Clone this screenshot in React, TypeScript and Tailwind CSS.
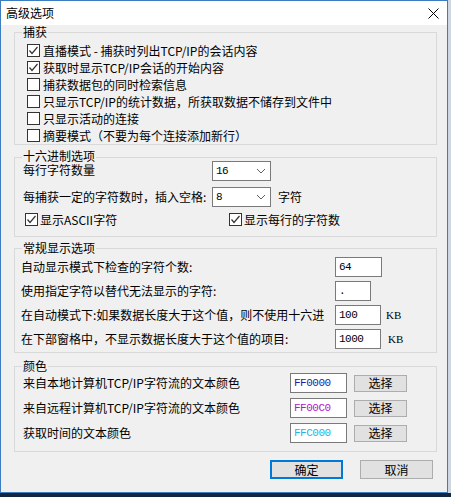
import React from 'react';

const font = "font-['Noto_Sans_CJK_SC',sans-serif]";
// Latin face first keeps the text box tight; the CJK glyphs still come from Noto
const tight = "font-['Liberation_Sans','Noto_Sans_CJK_SC',sans-serif]";

const Check: React.FC<{ checked?: boolean }> = ({ checked }) => (
  <span className="w-[13px] h-[13px] border border-[#333333] bg-white flex items-center justify-center shrink-0">
    {checked && (
      <svg width="11" height="11" viewBox="0 0 11 11">
        <path d="M1.5 5.5 L4 8.5 L9.5 2" stroke="#333333" strokeWidth="1.2" fill="none" />
      </svg>
    )}
  </span>
);

const Combo: React.FC<{ value: string }> = ({ value }) => (
  <div className="w-[59px] h-[20px] border border-[#7a7a7a] bg-white flex items-center justify-between pl-[3px] pr-[4px]">
    <span className="font-['Liberation_Mono',monospace] text-[11px] leading-[12px] tracking-[-0.5px]">{value}</span>
    <svg width="10" height="6" viewBox="0 0 10 6">
      <path d="M1 1 L5 5 L9 1" stroke="#606060" strokeWidth="1" fill="none" />
    </svg>
  </div>
);

const Field: React.FC<{ value: string; w: string; color?: string }> = ({ value, w, color }) => (
  <div className={`${w} h-[20px] border border-[#7a7a7a] bg-white flex items-center pl-[3px]`}>
    <span className={`font-['Liberation_Mono',monospace] text-[11px] tracking-[-0.5px] ${color ?? 'text-black'}`}>{value}</span>
  </div>
);

const captureRows = [
  { label: '直播模式 - 捕获时列出TCP/IP的会话内容', checked: true },
  { label: '获取时显示TCP/IP会话的开始内容', checked: true },
  { label: '捕获数据包的同时检索信息', checked: false },
  { label: '只显示TCP/IP的统计数据，所获取数据不储存到文件中', checked: false },
  { label: '只显示活动的连接', checked: false },
  { label: '摘要模式（不要为每个连接添加新行）', checked: false },
];

const colorRows = [
  { label: '来自本地计算机TCP/IP字符流的文本颜色', value: 'FF0000', color: 'text-[#1c1ca8]' },
  { label: '来自远程计算机TCP/IP字符流的文本颜色', value: 'FF00C0', color: 'text-[#b414c8]' },
  { label: '获取时间的文本颜色', value: 'FFC000', color: 'text-[#22b4e6]' },
];

export default function App() {
  return (
    <div className={`w-[451px] h-[497px] bg-[#12263f] flex flex-col ${font} text-[12px] text-black`}>
      <div className="flex bg-[#cfd8e2]">
        <div className="w-[448px] h-[493px] border border-[#3b7dc0] bg-[#f0f0f0] flex flex-col">
          {/* title bar */}
          <div className="h-[24px] bg-white flex items-center justify-between pl-[5px] pr-[8px]">
            <span className="text-[12px] leading-[14px]">高级选项</span>
            <svg width="11" height="11" viewBox="0 0 11 11">
              <path d="M0.5 0.5 L10.5 10.5 M10.5 0.5 L0.5 10.5" stroke="#000" strokeWidth="1" />
            </svg>
          </div>

          <div className="flex flex-col pl-[13px] pr-[10px]">
            {/* 捕获 */}
            <fieldset className="border border-[#d9d9d9] pl-[7px] pr-[7px]">
              <legend className="px-[1px] leading-[14px]">捕获</legend>
              <div className="flex flex-col pt-[3px] pl-[5px]">
                {captureRows.map((r) => (
                  <div key={r.label} className="h-[17px] flex items-center gap-[3px]">
                    <Check checked={r.checked} />
                    <span className="leading-[14px] whitespace-nowrap">{r.label}</span>
                  </div>
                ))}
              </div>
            </fieldset>

            {/* 十六进制选项 */}
            <fieldset className="mt-[6px] border border-[#d9d9d9] pl-[7px] pr-[7px] pb-[10px]">
              <legend className={`px-[1px] leading-[12px] ${tight}`}>十六进制选项</legend>
              <div className="flex flex-col -mt-[2px]">
                <div className="flex items-center pl-[1px]">
                  <span className={`w-[189px] leading-[12px] ${tight}`}>每行字符数量</span>
                  <Combo value="16" />
                </div>
                <div className="flex items-center pl-[1px] mt-[6px]">
                  <span className="w-[189px] leading-[14px] whitespace-nowrap">每捕获一定的字符数时，插入空格:</span>
                  <Combo value="8" />
                  <span className="ml-[7px] leading-[14px]">字符</span>
                </div>
                <div className="flex items-center pl-[3px] mt-[6px] h-[13px]">
                  <div className="w-[204px] flex items-center gap-[2px]">
                    <Check checked />
                    <span className="leading-[14px]">显示ASCII字符</span>
                  </div>
                  <div className="flex items-center gap-[2px]">
                    <Check checked />
                    <span className="leading-[14px]">显示每行的字符数</span>
                  </div>
                </div>
              </div>
            </fieldset>

            {/* 常规显示选项 */}
            <fieldset className="mt-[5px] border border-[#d9d9d9] pl-[7px] pr-[7px] pb-[3px]">
              <legend className="px-[1px] leading-[12px]">常规显示选项</legend>
              <div className="flex flex-col gap-[4px] pt-[3px] -ml-[1px]">
                <div className="h-[20px] flex items-center">
                  <span className="w-[314px] leading-[14px]">自动显示模式下检查的字符个数:</span>
                  <Field value="64" w="w-[47px]" />
                </div>
                <div className="h-[20px] flex items-center">
                  <span className="w-[314px] leading-[14px]">使用指定字符以替代无法显示的字符:</span>
                  <Field value="." w="w-[36px]" />
                </div>
                <div className="h-[20px] flex items-center">
                  <span className="w-[314px] leading-[14px] whitespace-nowrap">在自动模式下:如果数据长度大于这个值，则不使用十六进</span>
                  <Field value="100" w="w-[46px]" />
                  <span className="ml-[5px] font-['Liberation_Serif',serif] text-[11px]">KB</span>
                </div>
                <div className="h-[20px] flex items-center">
                  <span className="w-[314px] leading-[14px]">在下部窗格中，不显示数据长度大于这个值的项目:</span>
                  <Field value="1000" w="w-[46px]" />
                  <span className="ml-[7px] font-['Liberation_Serif',serif] text-[11px]">KB</span>
                </div>
              </div>
            </fieldset>

            {/* 颜色 */}
            <fieldset className="mt-[7px] border border-[#d9d9d9] pl-[7px] pr-[7px] pb-[8px]">
              <legend className="px-[1px] leading-[12px]">颜色</legend>
              <div className="flex flex-col gap-[5px] pt-[1px] pl-[1px]">
                {colorRows.map((r) => (
                  <div key={r.value} className="h-[20px] flex items-center">
                    <span className="w-[267px] leading-[14px] whitespace-nowrap">{r.label}</span>
                    <Field value={r.value} w="w-[57px]" color={r.color} />
                    <button className="ml-[7px] w-[53px] h-[17px] bg-[#e1e1e1] border border-[#adadad] flex items-center justify-center leading-[14px]">
                      选择
                    </button>
                  </div>
                ))}
              </div>
            </fieldset>

            {/* buttons */}
            <div className="mt-[8px] flex justify-end gap-[17px] pr-[4px]">
              <button className="w-[73px] h-[19px] bg-[#e1e1e1] border-2 border-[#0078d7] flex items-center justify-center leading-[14px]">
                确定
              </button>
              <button className="w-[73px] h-[19px] bg-[#e1e1e1] border border-[#adadad] flex items-center justify-center leading-[14px]">
                取消
              </button>
            </div>
          </div>
        </div>
      </div>
    </div>
  );
}
